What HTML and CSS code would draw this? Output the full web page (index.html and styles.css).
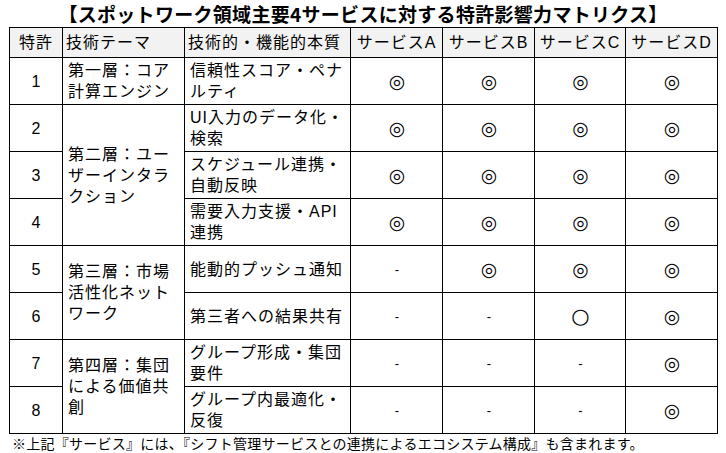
FILE: index.html
```html
<!DOCTYPE html>
<html lang="ja">
<head>
<meta charset="utf-8">
<title>特許影響力マトリクス</title>
<link rel="stylesheet" href="styles.css">
</head>
<body>
<div class="page">
  <h1 class="title">【スポットワーク領域主要4サービスに対する特許影響力マトリクス】</h1>
  <table class="matrix">
    <colgroup>
      <col class="c-no">
      <col class="c-theme">
      <col class="c-essence">
      <col class="c-svc">
      <col class="c-svc">
      <col class="c-svc3">
      <col class="c-svc">
    </colgroup>
    <thead>
      <tr>
        <th class="center">特許</th>
        <th>技術テーマ</th>
        <th>技術的・機能的本質</th>
        <th class="center">サービスA</th>
        <th class="center">サービスB</th>
        <th class="center">サービスC</th>
        <th class="center">サービスD</th>
      </tr>
    </thead>
    <tbody>
      <tr>
        <td class="center">1</td>
        <td class="theme">第一層：コア計算エンジン</td>
        <td>信頼性スコア・ペナルティ</td>
        <td class="mark">◎</td><td class="mark">◎</td><td class="mark">◎</td><td class="mark">◎</td>
      </tr>
      <tr>
        <td class="center">2</td>
        <td class="theme" rowspan="3">第二層：ユーザーインタラクション</td>
        <td>UI入力のデータ化・検索</td>
        <td class="mark">◎</td><td class="mark">◎</td><td class="mark">◎</td><td class="mark">◎</td>
      </tr>
      <tr>
        <td class="center">3</td>
        <td>スケジュール連携・自動反映</td>
        <td class="mark">◎</td><td class="mark">◎</td><td class="mark">◎</td><td class="mark">◎</td>
      </tr>
      <tr>
        <td class="center">4</td>
        <td>需要入力支援・API連携</td>
        <td class="mark">◎</td><td class="mark">◎</td><td class="mark">◎</td><td class="mark">◎</td>
      </tr>
      <tr>
        <td class="center">5</td>
        <td class="theme" rowspan="2">第三層：市場活性化ネットワーク</td>
        <td>能動的プッシュ通知</td>
        <td class="mark dash">-</td><td class="mark">◎</td><td class="mark">◎</td><td class="mark">◎</td>
      </tr>
      <tr>
        <td class="center">6</td>
        <td>第三者への結果共有</td>
        <td class="mark dash">-</td><td class="mark dash">-</td><td class="mark circle">○</td><td class="mark">◎</td>
      </tr>
      <tr>
        <td class="center">7</td>
        <td class="theme" rowspan="2">第四層：集団による価値共創</td>
        <td>グループ形成・集団要件</td>
        <td class="mark dash">-</td><td class="mark dash">-</td><td class="mark dash">-</td><td class="mark">◎</td>
      </tr>
      <tr>
        <td class="center">8</td>
        <td>グループ内最適化・反復</td>
        <td class="mark dash">-</td><td class="mark dash">-</td><td class="mark dash">-</td><td class="mark">◎</td>
      </tr>
    </tbody>
  </table>
  <p class="note">※上記『サービス』には、『シフト管理サービスとの連携によるエコシステム構成』も含まれます。</p>
</div>
</body>
</html>
```
FILE: styles.css
```css
html, body {
  margin: 0;
  padding: 0;
  background: #ffffff;
}

body {
  font-family: "Liberation Sans", "Noto Sans CJK JP", sans-serif;
  color: #000000;
}

.page {
  width: 726px;
  padding: 0 0 0 9px;
  box-sizing: border-box;
}

.title {
  margin: 0;
  height: 27px;
  line-height: 27px;
  font-size: 19px;
  font-weight: bold;
  text-align: center;
  padding-right: 9px;
  letter-spacing: 0.3px;
  font-family: "Noto Sans CJK JP", sans-serif;
}

.matrix {
  border-collapse: collapse;
  table-layout: fixed;
  width: 709px;
  font-size: 16px;
  letter-spacing: 1px;
}

.c-no { width: 53px; }
.c-theme { width: 122px; }
.c-essence { width: 166px; }
.c-svc { width: 92px; }
.c-svc3 { width: 91px; }

.matrix th,
.matrix td {
  border: 1px solid #000000;
  padding: 0 4px 0 5px;
  line-height: 21px;
  vertical-align: middle;
  text-align: left;
  font-weight: normal;
  word-break: break-all;
}

.matrix thead tr {
  height: 30px;
}

.matrix th {
  background: #f2f2f2;
  white-space: nowrap;
  padding: 0 3px;
}

.matrix th.center {
  text-align: center;
}

.matrix tbody tr {
  height: 47px;
}

.matrix td.center {
  text-align: center;
}

.matrix td.mark {
  text-align: center;
  font-family: "DejaVu Sans", "Noto Sans CJK JP", sans-serif;
  font-size: 19px;
  letter-spacing: 0;
}

.matrix td.dash {
  font-family: "Liberation Sans", sans-serif;
  font-size: 13px;
}

.matrix td.circle {
  font-family: "DejaVu Sans", "Noto Sans CJK JP", sans-serif;
  font-size: 21px;
}

.note {
  margin: 0;
  padding-left: 3px;
  font-size: 14px;
  line-height: 19px;
  letter-spacing: 0.25px;
  font-family: "Noto Sans CJK JP", sans-serif;
}
```
